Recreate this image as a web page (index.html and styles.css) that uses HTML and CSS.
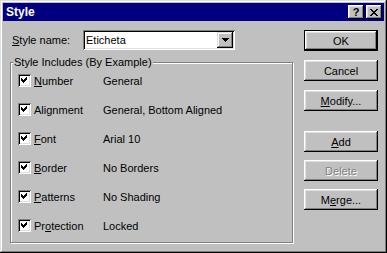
FILE: index.html
```html
<!DOCTYPE html>
<html>
<head>
<meta charset="utf-8">
<link rel="stylesheet" href="styles.css">
</head>
<body>
<div class="window">
  <div class="titlebar">
    <span class="title">Style</span>
    <div class="tbtns">
      <span class="tbtn tbtn-help">?</span>
      <span class="tbtn"><svg width="8" height="7" viewBox="0 0 8 7" shape-rendering="crispEdges"><path d="M0 0h2v1h1v1h2V1h1V0h2v1H7v1H6v1H5v1h1v1h1v1h1v1H6V6H5V5H3v1H2v1H0V6h1V5h1V4h1V3H2V2H1V1H0z" fill="#000"/></svg></span>
    </div>
  </div>
  <div class="body">
    <div class="left">
      <div class="namerow">
        <span class="namelabel"><u>S</u>tyle name:</span>
        <div class="combo">
          <span class="combo-text">Eticheta</span>
          <span class="combo-btn"><svg width="7" height="4" viewBox="0 0 7 4" shape-rendering="crispEdges"><path d="M0 0h7v1H6v1H5v1H4v1H3V3H2V2H1V1H0z" fill="#000"/></svg></span>
        </div>
      </div>
      <div class="group">
        <span class="group-label">Style Includes (By Example)</span>
        <div class="rows">
          <div class="row"><span class="cb"><svg width="7" height="7" viewBox="0 0 7 7" shape-rendering="crispEdges"><path d="M6 0v3H5v1H4v1H3v1H2V5H1V4H0V1h1v1h1v1h1V2h1V1h1V0z" fill="#000"/></svg></span><span class="lbl"><u>N</u>umber</span><span class="val">General</span></div>
          <div class="row"><span class="cb"><svg width="7" height="7" viewBox="0 0 7 7" shape-rendering="crispEdges"><path d="M6 0v3H5v1H4v1H3v1H2V5H1V4H0V1h1v1h1v1h1V2h1V1h1V0z" fill="#000"/></svg></span><span class="lbl">Ali<u>g</u>nment</span><span class="val">General, Bottom Aligned</span></div>
          <div class="row"><span class="cb"><svg width="7" height="7" viewBox="0 0 7 7" shape-rendering="crispEdges"><path d="M6 0v3H5v1H4v1H3v1H2V5H1V4H0V1h1v1h1v1h1V2h1V1h1V0z" fill="#000"/></svg></span><span class="lbl"><u>F</u>ont</span><span class="val">Arial 10</span></div>
          <div class="row"><span class="cb"><svg width="7" height="7" viewBox="0 0 7 7" shape-rendering="crispEdges"><path d="M6 0v3H5v1H4v1H3v1H2V5H1V4H0V1h1v1h1v1h1V2h1V1h1V0z" fill="#000"/></svg></span><span class="lbl"><u>B</u>order</span><span class="val">No Borders</span></div>
          <div class="row"><span class="cb"><svg width="7" height="7" viewBox="0 0 7 7" shape-rendering="crispEdges"><path d="M6 0v3H5v1H4v1H3v1H2V5H1V4H0V1h1v1h1v1h1V2h1V1h1V0z" fill="#000"/></svg></span><span class="lbl"><u>P</u>atterns</span><span class="val">No Shading</span></div>
          <div class="row"><span class="cb"><svg width="7" height="7" viewBox="0 0 7 7" shape-rendering="crispEdges"><path d="M6 0v3H5v1H4v1H3v1H2V5H1V4H0V1h1v1h1v1h1V2h1V1h1V0z" fill="#000"/></svg></span><span class="lbl">Pr<u>o</u>tection</span><span class="val">Locked</span></div>
        </div>
      </div>
    </div>
    <div class="right">
      <button class="btn btn-default">OK</button>
      <button class="btn btn-gap">Cancel</button>
      <button class="btn btn-gap"><u>M</u>odify...</button>
      <button class="btn btn-sep"><u>A</u>dd</button>
      <button class="btn btn-gap2 btn-disabled">Delete</button>
      <button class="btn btn-gap2">M<u>e</u>rge...</button>
    </div>
  </div>
</div>
</body>
</html>
```

FILE: styles.css
```css
* { box-sizing: border-box; }
body {
  margin: 0;
  background: #c0c0c0;
  font-family: "Liberation Sans", Arial, sans-serif;
  font-size: 11px;
  color: #000;
}
.window {
  width: 387px;
  height: 253px;
  padding: 3px;
  background: #c0c0c0;
  box-shadow: inset -1px -1px #000, inset 1px 1px #dfdfdf, inset -2px -2px #808080, inset 2px 2px #fff;
}
.titlebar {
  height: 18px;
  background: #000080;
  color: #fff;
  display: flex;
  align-items: center;
  justify-content: space-between;
  padding: 0 2px 0 3px;
}
.title {
  font-weight: bold;
  font-size: 12px;
}
.tbtns {
  display: flex;
  gap: 2px;
}
.tbtn {
  width: 16px;
  height: 14px;
  background: #c0c0c0;
  color: #000;
  display: flex;
  align-items: center;
  justify-content: center;
  box-shadow: inset -1px -1px #000, inset 1px 1px #fff, inset -2px -2px #808080, inset 2px 2px #dfdfdf;
}
.tbtn-help {
  font-weight: bold;
  font-size: 11px;
  line-height: 14px;
  padding-bottom: 1px;
}
.body {
  display: flex;
  justify-content: space-between;
}
.left {
  padding: 9px 0 0 7px;
}
.namerow {
  display: flex;
  align-items: center;
  height: 20px;
  padding-left: 2px;
}
.namelabel {
  width: 71px;
}
.combo {
  width: 152px;
  height: 20px;
  background: #fff;
  padding: 2px;
  display: flex;
  align-items: center;
  box-shadow: inset 1px 1px #808080, inset -1px -1px #fff, inset 2px 2px #000, inset -2px -2px #dfdfdf;
}
.combo-text {
  padding-left: 1px;
}
.combo-btn {
  margin-left: auto;
  width: 16px;
  height: 16px;
  background: #c0c0c0;
  display: flex;
  align-items: center;
  justify-content: center;
  box-shadow: inset -1px -1px #000, inset 1px 1px #dfdfdf, inset -2px -2px #808080, inset 2px 2px #fff;
}
.group {
  position: relative;
  margin-top: 12px;
  width: 283px;
  height: 181px;
  border: 1px solid #808080;
  box-shadow: inset 1px 1px #fff, 1px 1px #fff;
}
.group-label {
  position: absolute;
  top: -7px;
  left: 2px;
  padding: 0 1px;
  line-height: 13px;
  background: #c0c0c0;
}
.rows {
  padding: 3px 0 0 7px;
}
.row {
  height: 29px;
  display: flex;
  align-items: center;
}
.cb {
  width: 13px;
  height: 13px;
  background: #fff;
  display: flex;
  align-items: center;
  justify-content: center;
  margin-right: 3px;
  box-shadow: inset 1px 1px #808080, inset -1px -1px #fff, inset 2px 2px #000, inset -2px -2px #dfdfdf;
}
.lbl {
  width: 69px;
}
.right {
  display: flex;
  flex-direction: column;
  padding: 9px 6px 0 0;
}
.btn {
  width: 74px;
  height: 21px;
  padding: 0;
  border: none;
  background: #c0c0c0;
  font-family: "Liberation Sans", Arial, sans-serif;
  font-size: 11px;
  color: #000;
  box-shadow: inset -1px -1px #000, inset 1px 1px #fff, inset -2px -2px #808080, inset 2px 2px #dfdfdf;
}
.btn-default {
  box-shadow: inset 0 0 0 1px #000, inset -2px -2px #000, inset 2px 2px #fff, inset -3px -3px #808080, inset 3px 3px #dfdfdf;
}
.btn-gap { margin-top: 9px; }
.btn-sep { margin-top: 20px; }
.btn-gap2 { margin-top: 8px; }
.btn-disabled {
  color: #808080;
  text-shadow: 1px 1px #fff;
}
```
